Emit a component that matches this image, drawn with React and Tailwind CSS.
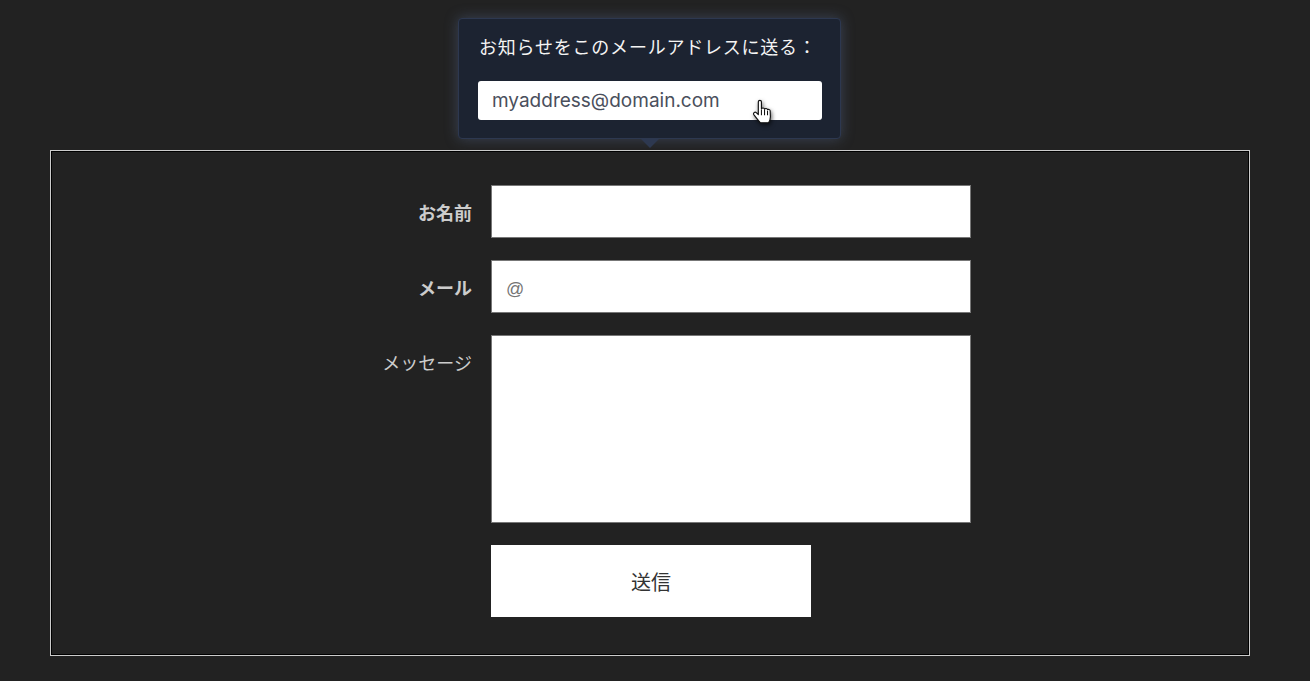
export default function App() {
  const cjk = "font-['Liberation_Sans','Noto_Sans_CJK_JP',sans-serif]";
  const label = "w-[421px] text-right text-[18px] text-[#cccccc] leading-[24px] pt-[17px]";
  const field = "ml-[19px] w-[480px] bg-white border border-[#777777]";
  return (
    <div className={`relative min-h-[681px] bg-[#222222] pl-[50px] pr-[60px] pt-[150px] pb-[25px] ${cjk}`}>
      <div className="absolute left-[458px] top-[18px] w-[383px] h-[121px] rounded-[4px] border border-[#2d3850] bg-[#1c2331] shadow-[0_0_14px_rgba(90,110,150,0.45)] px-[19px] pt-[17px]">
        <p className="text-[18px] leading-[24px] text-[#f4f4f4] tracking-[0.78px] m-0 pl-[1px] whitespace-nowrap">お知らせをこのメールアドレスに送る：</p>
        <div className="mt-[21px] w-[344px] h-[39px] rounded-[3px] bg-white pl-[14px] pt-[2px] flex items-center font-['Inter',sans-serif] text-[19px] text-[#4a4f5c] whitespace-nowrap">myaddress@domain.com</div>
        <div className="absolute left-[182px] top-[120px] w-0 h-0 border-l-[9px] border-r-[9px] border-t-[9px] border-l-transparent border-r-transparent border-t-[#2d3850]" />
        <svg className="absolute left-[293px] top-[79px] drop-shadow-[1px_2px_2px_rgba(0,0,0,0.6)]" width="23" height="30" viewBox="0 0 20 26">
          <path d="M5.5 3.2c0-1.6 2.7-1.6 2.7 0v6.2c.4-1 2.5-1 2.7.3.5-.9 2.4-.8 2.6.5.6-.7 2.2-.4 2.3.9l.2 5.2c0 2.3-.6 3.8-1.6 5.2H7.3C6.2 20.2 3.5 17 1.7 14.6c-1-1.4.7-3 2-1.9l1.8 1.7z" fill="#fff" stroke="#111" strokeWidth="1" strokeLinejoin="round" />
          <path d="M8.2 10v5M10.9 10v5M13.5 11v4" stroke="#111" strokeWidth="0.9" fill="none" />
        </svg>
      </div>
      <div className="border border-[#cccccc] shadow-[inset_0_0_0_1px_#000000] h-[506px] pt-[34px]">
        <div className="flex flex-col">
          <div className="flex h-[53px] items-start">
            <label className={`${label} font-bold`}>お名前</label>
            <div className={`${field} h-[53px]`} />
          </div>
          <div className="flex h-[53px] items-start mt-[22px]">
            <label className={`${label} font-bold`}>メール</label>
            <div className={`${field} h-[53px] pl-[14px] pt-[16px] text-[18px] leading-[24px] text-[#757575]`}>@</div>
          </div>
          <div className="flex h-[188px] items-start mt-[22px]">
            <label className={label}>メッセージ</label>
            <div className={`${field} h-[188px]`} />
          </div>
          <button className="mt-[22px] ml-[440px] w-[320px] h-[72px] bg-white text-[20px] text-[#333333] pt-[3px]">送信</button>
        </div>
      </div>
    </div>
  );
}
